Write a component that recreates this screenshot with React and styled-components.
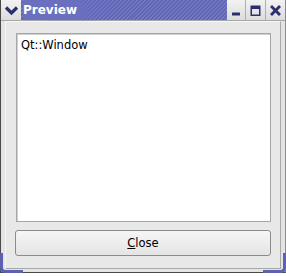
import React from "react";
import styled, { createGlobalStyle } from "styled-components";

const Global = createGlobalStyle`
  html, body { margin: 0; padding: 0; background: #ffffff; }
  body { font-family: "DejaVu Sans", "Liberation Sans", sans-serif; }
`;

const Window = styled.div`
  position: relative;
  width: 286px;
  height: 273px;
  box-sizing: border-box;
  display: flex;
  flex-direction: column;
  background: #e4e4e4;
  border-left: 1px solid #4a4a4a;
  border-bottom: 1px solid #4a4a4a;
  border-right: 1px solid #8a8a8a;
  &::before, &::after {
    content: "";
    position: absolute;
    bottom: -1px;
    width: 20px;
    height: 17px;
    border-bottom: 3px solid #5c61b4;
  }
  &::before {
    left: -1px;
    border-left: 3px solid #5c61b4;
    border-bottom-left-radius: 5px;
  }
  &::after {
    right: -1px;
    border-right: 3px solid #5c61b4;
    border-bottom-right-radius: 5px;
  }
`;

const TitleBar = styled.div`
  display: flex;
  height: 20px;
  border-bottom: 1px solid #a8a8a8;
`;

const TitleButton = styled.div`
  width: ${p => p.$w || 19}px;
  height: 20px;
  flex: none;
  display: flex;
  align-items: center;
  justify-content: center;
  background: linear-gradient(#f2f2f2, #dcdcdc);
  border-left: ${p => (p.$sep ? "1px solid #b0b0b0" : "none")};
`;

const TitleArea = styled.div`
  flex: 1;
  display: flex;
  align-items: center;
  padding-left: 2px;
  background-color: #6a6fc0;
  background-image: repeating-linear-gradient(
    -45deg,
    #6065b2 0px,
    #6065b2 1.4px,
    #7378c6 1.4px,
    #7378c6 2.8px
  );
`;

const TitleText = styled.span`
  color: #ffffff;
  font-weight: bold;
  font-size: 12px;
  background: #6a6fc0;
  padding: 0 4px 0 0;
  line-height: 20px;
  box-shadow: 20px 0 12px -4px #6a6fc0;
`;

const Frame = styled.div`
  flex: 1;
  display: flex;
  padding: 0 4px 3px 4px;
`;

const Client = styled.div`
  flex: 1;
  display: flex;
  flex-direction: column;
  gap: 8px;
  padding: 11px 9px 12px 10px;
  border-left: 1px solid #f6f6f6;
  border-top: 1px solid #f6f6f6;
  border-right: 1px solid #a8a8a8;
  border-bottom: 1px solid #a8a8a8;
  background: #e8e8e8;
`;

const TextBox = styled.div`
  flex: 1;
  background: #ffffff;
  border: 1px solid #a6a6a6;
  box-shadow: inset 1px 1px 0 #d0d0d0;
  padding: 4px 4px;
  font-size: 11.5px;
  color: #000;
`;

const Button = styled.div`
  height: 26px;
  box-sizing: border-box;
  border: 1px solid #8c8c8c;
  border-radius: 3px;
  background: linear-gradient(#f6f6f6, #e4e4e4);
  display: flex;
  align-items: center;
  justify-content: center;
  font-size: 11.5px;
  color: #000;
  margin-left: -1px;
`;

const U = styled.span`
  text-decoration: underline;
`;

const Icon = ({ children }) => (
  <svg width="15" height="15" viewBox="0 0 15 15" fill="#2b2f6e">
    {children}
  </svg>
);

export default function App() {
  return (
    <>
      <Global />
      <Window>
        <TitleBar>
          <TitleButton $w={20}>
            <svg width="15" height="15" viewBox="0 0 15 15">
              <path d="M2 4.5 L7.5 10 L13 4.5" stroke="#2b2f6e" strokeWidth="3.2" fill="none" />
            </svg>
          </TitleButton>
          <TitleArea>
            <TitleText>Preview</TitleText>
          </TitleArea>
          <TitleButton $w={18}>
            <Icon>
              <rect x="3" y="9.5" width="8" height="3" rx="0.5" />
            </Icon>
          </TitleButton>
          <TitleButton $w={19} $sep>
            <Icon>
              <path d="M2.5 2.5h10v10.5h-10z M4 6v5.5h7V6z" fillRule="evenodd" />
            </Icon>
          </TitleButton>
          <TitleButton $w={19} $sep>
            <Icon>
              <path d="M2 4 L4 2 L7.5 5.5 L11 2 L13 4 L9.5 7.5 L13 11 L11 13 L7.5 9.5 L4 13 L2 11 L5.5 7.5 Z" />
            </Icon>
          </TitleButton>
        </TitleBar>
        <Frame>
          <Client>
            <TextBox>Qt::Window</TextBox>
            <Button>
              <U>C</U>lose
            </Button>
          </Client>
        </Frame>
      </Window>
    </>
  );
}
